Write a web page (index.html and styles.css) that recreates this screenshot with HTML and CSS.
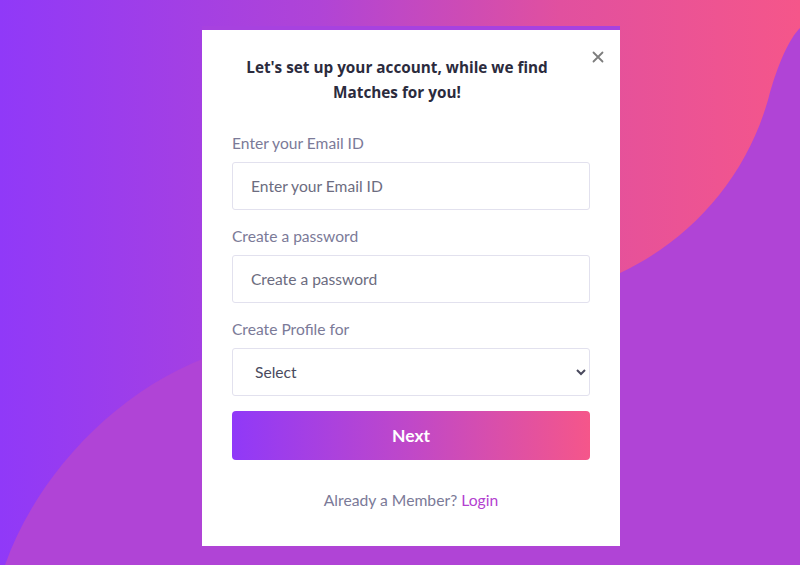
FILE: index.html
```html
<!DOCTYPE html>
<html lang="en">
<head>
<meta charset="utf-8">
<title>Sign up</title>
<link rel="stylesheet" href="styles.css">
</head>
<body>
<div class="stage">
  <svg class="blob" width="800" height="565" viewBox="0 0 800 565" aria-hidden="true">
    <path d="M5 565 C 35 480, 110 395, 205 358 L 620 273 C 690 240, 745 180, 768 100 C 778 62, 790 38, 800 28 L 800 565 Z" fill="#b044d6"/>
  </svg>
  <div class="card">
    <button class="close" type="button" aria-label="Close">
      <svg width="12" height="12" viewBox="0 0 12 12"><path d="M1.5 1.5 L10.5 10.5 M10.5 1.5 L1.5 10.5" stroke="#7d7d7d" stroke-width="1.8" stroke-linecap="round"/></svg>
    </button>
    <h2 class="title">Let's set up your account, while we find Matches for you!</h2>
    <form class="form">
      <label class="label" for="email">Enter your Email ID</label>
      <input class="field" id="email" type="email" placeholder="Enter your Email ID">
      <label class="label" for="pw">Create a password</label>
      <input class="field" id="pw" type="password" placeholder="Create a password">
      <label class="label" for="pf">Create Profile for</label>
      <select class="field select" id="pf">
        <option>Select</option>
      </select>
      <button class="next" type="button">Next</button>
    </form>
    <p class="login">Already a Member? <a href="#">Login</a></p>
  </div>
</div>
</body>
</html>
```
FILE: styles.css
```css
* { box-sizing: border-box; }
html, body { margin: 0; padding: 0; }
body {
  width: 800px;
  height: 565px;
  overflow: hidden;
  font-family: Lato, "Noto Sans", sans-serif;
}
.stage {
  position: relative;
  width: 800px;
  height: 565px;
  background: linear-gradient(90deg, #9039f8 0%, #b044d6 40%, #e1509f 70%, #f5568a 100%);
  padding-top: 26px;
}
.blob {
  position: absolute;
  left: 0;
  top: 0;
}
.card {
  position: relative;
  margin-left: 202px;
  width: 418px;
  height: 520px;
  background: #fff;
  border-top: 4px solid #a742df;
  padding: 25px 30px 0 30px;
}
.close {
  position: absolute;
  right: 16px;
  top: 21px;
  width: 12px;
  height: 12px;
  padding: 0;
  border: 0;
  background: none;
  display: flex;
}
.title {
  margin: 0 28px 0 0;
  font-family: "Open Sans", Lato, sans-serif;
  font-size: 15.3px;
  font-weight: 700;
  line-height: 25px;
  color: #2b2b3d;
  text-align: center;
}
.form {
  display: flex;
  flex-direction: column;
  margin-top: 27px;
}
.label {
  font-size: 15.6px;
  line-height: 22px;
  color: #7b7a98;
  margin-bottom: 8px;
}
.field {
  height: 48px;
  border: 1px solid #e2e1ee;
  border-radius: 3px;
  padding: 0 18px;
  font-family: Lato, "Noto Sans", sans-serif;
  font-size: 15.6px;
  color: #4a4a5e;
  background: #fff;
  margin-bottom: 15px;
  outline: none;
}
.field::placeholder { color: #6c6c80; }
.select {
  padding-left: 18px;
  color: #4a4a5e;
}
.next {
  height: 49px;
  border: 0;
  border-radius: 4px;
  background: linear-gradient(90deg, #9039f8 0%, #c048c8 50%, #f5568a 100%);
  color: #fff;
  font-family: Lato, "Noto Sans", sans-serif;
  font-weight: 700;
  font-size: 17.5px;
}
.login {
  margin: 29px 0 0 0;
  text-align: center;
  font-size: 15.7px;
  line-height: 22px;
  color: #7b7a98;
}
.login a {
  color: #b341d0;
  text-decoration: none;
}
```
